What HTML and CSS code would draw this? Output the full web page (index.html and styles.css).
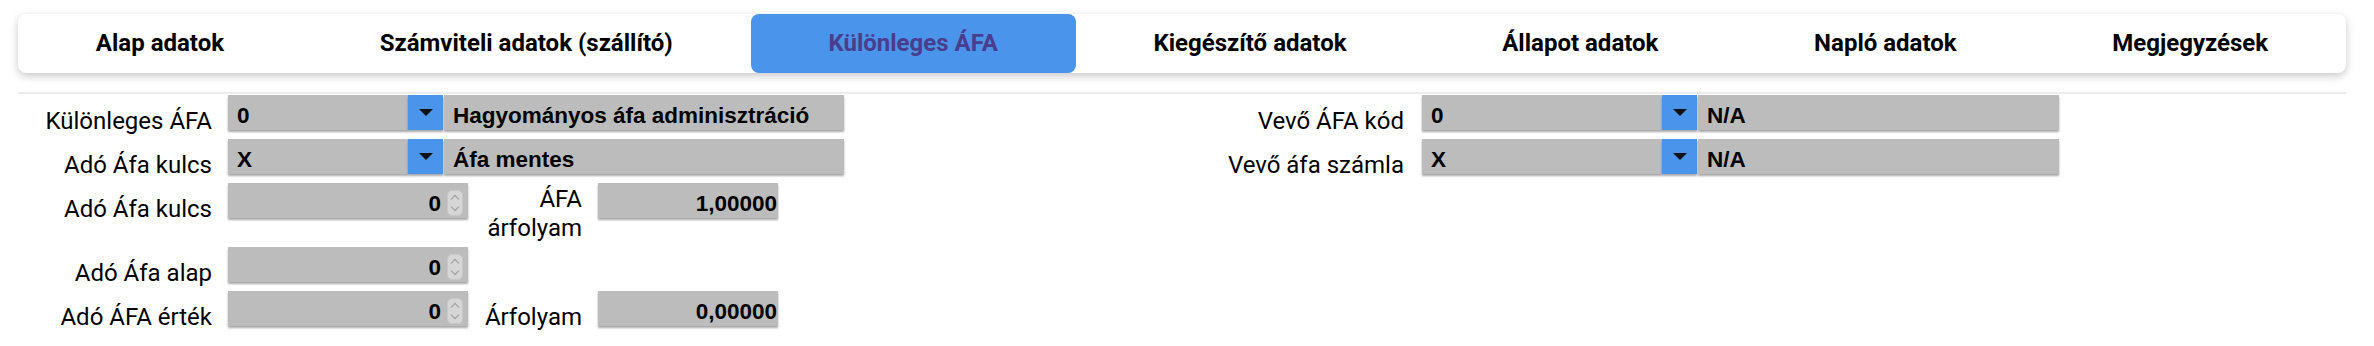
FILE: index.html
```html
<!DOCTYPE html>
<html lang="hu">
<head>
    <meta charset="UTF-8">
    <meta name="viewport" content="width=device-width, initial-scale=1.0">
    <title>Különleges ÁFA</title>
    <link rel="stylesheet" href="styles.css">
</head>
<body>
    <div class="Tabs">
        <div class="tab">Alap adatok</div>
        <div class="tab">Számviteli adatok (szállító)</div>
        <div class="tab active">Különleges ÁFA</div>
        <div class="tab">Kiegészítő adatok</div>
        <div class="tab">Állapot adatok</div>
        <div class="tab">Napló adatok</div>
        <div class="tab">Megjegyzések</div>
    </div>
    <div class="divider"></div>
    <div class="Contents">
        <div class="col">
            <div class="row">
                <label class="lbl">Különleges ÁFA</label>
                <div class="sel"><span class="val">0</span></div>
                <div class="btn"><span class="arrow"></span></div>
                <div class="desc">Hagyományos áfa adminisztráció</div>
            </div>
            <div class="row">
                <label class="lbl">Adó Áfa kulcs</label>
                <div class="sel"><span class="val">X</span></div>
                <div class="btn"><span class="arrow"></span></div>
                <div class="desc">Áfa mentes</div>
            </div>
            <div class="row">
                <label class="lbl">Adó Áfa kulcs</label>
                <div class="num"><span class="val">0</span><span class="spin"><i class="up"></i><i class="down"></i></span></div>
                <label class="lbl mid two">ÁFA árfolyam</label>
                <div class="rate">1,00000</div>
            </div>
            <div class="row">
                <label class="lbl">Adó Áfa alap</label>
                <div class="num"><span class="val">0</span><span class="spin"><i class="up"></i><i class="down"></i></span></div>
            </div>
            <div class="row">
                <label class="lbl">Adó ÁFA érték</label>
                <div class="num"><span class="val">0</span><span class="spin"><i class="up"></i><i class="down"></i></span></div>
                <label class="lbl mid">Árfolyam</label>
                <div class="rate">0,00000</div>
            </div>
        </div>
        <div class="col right">
            <div class="row">
                <label class="lbl">Vevő ÁFA kód</label>
                <div class="sel"><span class="val">0</span></div>
                <div class="btn"><span class="arrow"></span></div>
                <div class="desc">N/A</div>
            </div>
            <div class="row">
                <label class="lbl">Vevő áfa számla</label>
                <div class="sel"><span class="val">X</span></div>
                <div class="btn"><span class="arrow"></span></div>
                <div class="desc">N/A</div>
            </div>
        </div>
    </div>
</body>
</html>
```

FILE: styles.css
```css
body{
    margin: 0;
    padding: 14px 28px 0 18px;
    background-color: #ffffff;
    font-family: Roboto, "Liberation Sans", sans-serif;
    color: #000000;
}
.Tabs{
    display: flex;
    height: 59px;
    background: #ffffff;
    border-radius: 8px;
    box-shadow: 0 3px 8px rgba(0, 0, 0, 0.22);
}
.tab{
    flex: 1 1 auto;
    text-align: center;
    line-height: 59px;
    font-size: 24px;
    font-weight: bold;
    white-space: nowrap;
}
.tab.active{
    background-color: #4a94ec;
    color: #4a3d8c;
    border-radius: 8px;
}
.divider{
    margin-top: 19px;
    height: 2px;
    background-color: #ececec;
}
.Contents{
    display: grid;
    grid-template-columns: 1fr 1fr;
    padding-top: 1px;
}
.row{
    display: flex;
    align-items: flex-start;
    margin-bottom: 4px;
}
.lbl{
    width: 194px;
    flex: none;
    text-align: right;
    font-size: 24px;
    line-height: 28px;
    padding-top: 12px;
    margin-right: 16px;
}
.right .lbl{
    width: 222px;
    margin-right: 18px;
}
.lbl.mid{
    width: 98px;
    margin-left: 16px;
}
.lbl.two{
    line-height: 29px;
    padding-top: 2px;
}
/* 入力欄 */
.sel, .desc, .num, .rate{
    box-sizing: border-box;
    height: 35px;
    padding: 6px 9px 0 9px;
    line-height: 29px;
    background-color: #bcbcbc;
    font-family: "Liberation Sans", Arial, sans-serif;
    font-size: 22.5px;
    font-weight: bold;
    box-shadow: 0 2px 2px rgba(0, 0, 0, 0.35);
    white-space: nowrap;
}
.sel{
    width: 180px;
}
.right .sel{
    width: 240px;
}
.btn{
    width: 35px;
    height: 35px;
    background-color: #4a94ec;
    box-shadow: 0 2px 2px rgba(0, 0, 0, 0.35);
    display: flex;
    align-items: center;
    justify-content: center;
}
.arrow{
    width: 0;
    height: 0;
    border-left: 7px solid transparent;
    border-right: 7px solid transparent;
    border-top: 7px solid #111111;
}
.desc{
    width: 400px;
    margin-left: 1px;
}
.right .desc{
    width: 361px;
}
.num{
    width: 240px;
    display: flex;
    align-items: flex-start;
    justify-content: flex-end;
    padding-right: 5px;
}
.num .val{
    margin-right: 6px;
}
.spin{
    width: 16px;
    height: 26px;
    margin-top: 1px;
    box-sizing: border-box;
    border: 1px solid #c8c8c8;
    border-radius: 5px;
    background-color: #d6d6d6;
    display: flex;
    flex-direction: column;
    align-items: center;
    justify-content: space-around;
}
.spin i{
    width: 5px;
    height: 5px;
    border-left: 1.5px solid #9a9a9a;
    border-top: 1.5px solid #9a9a9a;
}
.spin .up{
    transform: translateY(2px) rotate(45deg);
}
.spin .down{
    transform: translateY(-2px) rotate(225deg);
}
.rate{
    width: 180px;
    text-align: right;
    padding-right: 1px;
}
```
